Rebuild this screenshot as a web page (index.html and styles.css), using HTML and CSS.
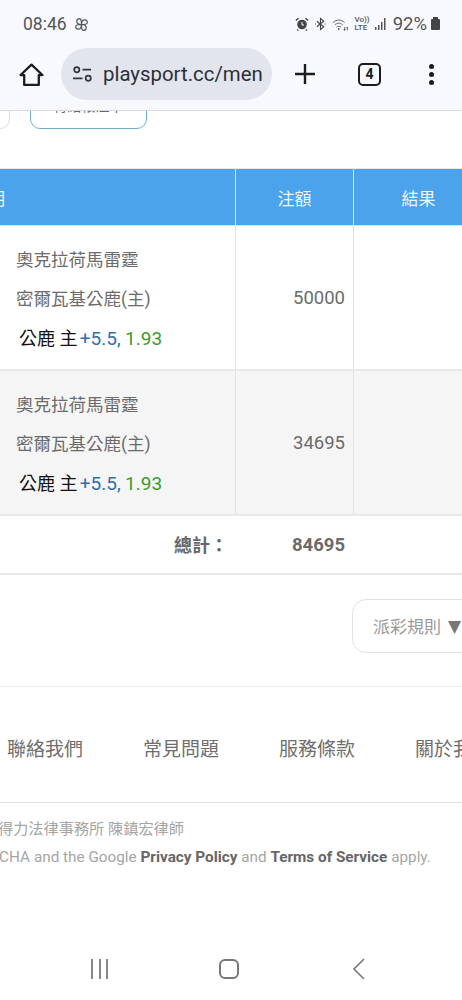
FILE: index.html
```html
<!DOCTYPE html>
<html lang="zh-Hant">
<head>
<meta charset="utf-8">
<title>playsport.cc</title>
<link rel="stylesheet" href="styles.css">
</head>
<body>
<div class="phone">
  <header class="chrome">
    <div class="status">
      <div class="status-left">
        <span>08:46</span>
        <svg class="fan" viewBox="0 0 18 18" width="17" height="17" fill="none" stroke="#555" stroke-width="1.3"><path d="M9 9C6 9 4 7.500 4 5.500 4 3.500 6 2.500 7.500 3 9 3.500 9 6 9 9ZM9 9C9 6 10.500 4 12.500 4 14.500 4 15.500 6 15 7.500 14.500 9 12 9 9 9ZM9 9C12 9 14 10.500 14 12.500 14 14.500 12 15.500 10.500 15 9 14.500 9 12 9 9ZM9 9C9 12 7.500 14 5.500 14 3.500 14 2.500 12 3 10.500 3.500 9 6 9 9 9Z"/></svg>
      </div>
      <div class="status-right">
        <svg viewBox="0 0 14 14" width="14" height="14"><circle cx="7" cy="7.500" r="4.800" fill="#444"/><path d="M1 3.500 3.500 1.200M13 3.500 10.500 1.200M3.200 12.500 2.200 13.500M10.800 12.500 11.800 13.500" stroke="#444" stroke-width="1.500"/><path d="M7 5v3h2" stroke="#fff" stroke-width="1" fill="none"/></svg>
        <svg viewBox="0 0 14 14" width="13" height="14" fill="none" stroke="#444" stroke-width="1.200"><path d="M3 4 10.500 10 7 13V1l3.500 3L3 10"/><path d="M1 7h1.500M11.500 7H13" stroke-dasharray="1 1"/></svg>
        <svg viewBox="0 0 20 14" width="18" height="13" fill="none" stroke="#555" stroke-width="1"><path d="M1 5C5 1 10 1 14 5M3 7.500C6 5 9 5 12 7.500M5 10C6.500 8.700 8.500 8.700 10 10"/><circle cx="7.500" cy="12" r="1" fill="#555" stroke="none"/><path d="M14 10v3.500M13 12.500l1 1 1-1M17 13.500V10M16 11l1-1 1 1"/></svg>
        <span class="lte"><span>Vo))</span><span>LTE</span></span>
        <svg viewBox="0 0 12 12" width="12" height="12" fill="#555"><rect x="0" y="9" width="1.500" height="3"/><rect x="3" y="7" width="1.500" height="5"/><rect x="6" y="4" width="1.500" height="8"/><rect x="9" y="0" width="1.500" height="12"/></svg>
        <span class="pct">92%</span>
        <span class="battery"></span>
      </div>
    </div>
    <div class="toolbar">
      <svg class="home" viewBox="0 0 24 24" width="25" height="25" fill="none" stroke="#1c1c1e" stroke-width="2.200" stroke-linejoin="round"><path d="M1.500 12.500 12 2.500l10.500 10H19V22H5v-9.500Z"/></svg>
      <div class="omnibox">
        <svg viewBox="0 0 22 18" width="21" height="18" fill="none" stroke="#33363c" stroke-width="1.800"><circle cx="5" cy="4.500" r="2.700"/><path d="M11 4.500h9M1 13.500h10"/><circle cx="17" cy="13.500" r="2.700"/></svg>
        <span class="url">playsport.cc/men</span>
      </div>
      <svg class="plus" viewBox="0 0 24 24" width="24" height="24" stroke="#1c1c1e" stroke-width="2.400"><path d="M12 2v20M2 12h20"/></svg>
      <span class="tabs">4</span>
      <span class="more"><i></i><i></i><i></i></span>
    </div>
  </header>

  <main class="viewport">
    <div class="sheet">
      <div class="tab-clip">
        <div class="tab-row">
          <a class="tab tab-grey">全部注單</a>
          <a class="tab tab-active">待結帳注單</a>
        </div>
      </div>

      <table class="bets">
        <thead>
          <tr><th class="col-game">投注項目說明</th><th class="col-amt">注額</th><th class="col-res">結果</th></tr>
        </thead>
        <tbody>
          <tr class="first">
            <td class="game">
              <p>奧克拉荷馬雷霆</p>
              <p>密爾瓦基公鹿(主)</p>
              <p class="pick"><b>公鹿 主</b> <em class="spread">+5.5,</em> <em class="odds">1.93</em></p>
            </td>
            <td class="amt">50000</td>
            <td></td>
          </tr>
          <tr class="alt">
            <td class="game">
              <p>奧克拉荷馬雷霆</p>
              <p>密爾瓦基公鹿(主)</p>
              <p class="pick"><b>公鹿 主</b> <em class="spread">+5.5,</em> <em class="odds">1.93</em></p>
            </td>
            <td class="amt">34695</td>
            <td></td>
          </tr>
        </tbody>
        <tfoot>
          <tr>
            <td class="total-label">總計：</td>
            <td class="amt total-num">84695</td>
            <td></td>
          </tr>
        </tfoot>
      </table>

      <div class="rules-row">
        <a class="rules">派彩規則 <span class="tri">▼</span></a>
      </div>

      <nav class="foot-links">
        <a>聯絡我們</a><a>常見問題</a><a>服務條款</a><a>關於我們</a>
      </nav>

      <div class="legal">
        <p class="lawyer">法律顧問：得力法律事務所 陳鎮宏律師</p>
        <p class="recaptcha">This site is protected by reCAPTCHA and the Google <b>Privacy Policy</b> and <b>Terms of Service</b> apply.</p>
      </div>
    </div>
  </main>

  <footer class="navbar">
    <span class="recents"><i></i><i></i><i></i></span>
    <span class="homebtn"></span>
    <svg viewBox="0 0 14 24" width="14" height="24" fill="none" stroke="#777" stroke-width="1.600"><path d="M12 2 2 12l10 10"/></svg>
  </footer>
</div>
</body>
</html>
```

FILE: styles.css
```css
* { box-sizing: border-box; }
html, body { margin: 0; padding: 0; }
body {
  font-family: Roboto, "Noto Sans CJK TC", sans-serif;
  background: #fff;
}
.phone {
  width: 462px;
  height: 1000px;
  overflow: hidden;
  display: flex;
  flex-direction: column;
}
.chrome {
  height: 111px;
  flex: none;
  background: #f8f9ff;
  border-bottom: 1px solid #d9dade;
}
.status {
  height: 48px;
  padding: 0 22px 0 23px;
  display: flex;
  justify-content: space-between;
  align-items: center;
  color: #555;
}
.status-left {
  display: flex;
  align-items: center;
  gap: 6px;
  font-size: 17.500px;
}
.status-right {
  display: flex;
  align-items: center;
  gap: 5px;
}
.lte {
  display: flex;
  flex-direction: column;
  font-size: 8px;
  line-height: 8px;
  font-weight: 500;
  color: #555;
}
.pct { font-size: 18.500px; margin-left: 1px; margin-right: -1px; }
.battery {
  width: 9px;
  height: 11px;
  background: #444;
  border-radius: 1px;
  position: relative;
}
.battery::before {
  content: "";
  position: absolute;
  top: -2px;
  left: 2px;
  width: 5px;
  height: 2px;
  background: #444;
}
.toolbar {
  height: 52px;
  display: flex;
  align-items: center;
  padding-left: 19px;
}
.home { flex: none; }
.omnibox {
  width: 211px;
  height: 52px;
  margin-left: 17px;
  border-radius: 26px;
  background: #e2e5ed;
  display: flex;
  align-items: center;
  gap: 10px;
  padding-left: 11px;
  overflow: hidden;
  flex: none;
}
.url {
  font-size: 20.400px;
  color: #2d3036;
  white-space: nowrap;
}
.plus { flex: none; margin-left: 21px; }
.tabs {
  flex: none;
  margin-left: 41px;
  width: 23px;
  height: 23px;
  border: 2.200px solid #1c1c1e;
  border-radius: 5px;
  font-size: 14px;
  font-weight: 700;
  color: #1c1c1e;
  display: flex;
  align-items: center;
  justify-content: center;
}
.more {
  flex: none;
  margin-left: 48px;
  display: flex;
  flex-direction: column;
  gap: 3px;
}
.more i {
  width: 5px;
  height: 5px;
  border-radius: 50%;
  background: #1c1c1e;
}

.viewport {
  flex: 1;
  overflow: hidden;
  background: #fff;
}
.sheet {
  width: 1000px;
  margin-left: -300px;
}
.tab-clip {
  height: 18px;
  overflow: hidden;
  display: flex;
  align-items: flex-end;
}
.tab-row {
  display: flex;
  gap: 20px;
  padding-left: 200px;
  flex: none;
}
.tab {
  width: 110px;
  height: 40px;
  border: 1px solid #ddd;
  border-radius: 10px;
  font-size: 14px;
  color: #666;
  display: flex;
  align-items: center;
  justify-content: center;
  line-height: 1;
  padding-bottom: 6px;
}
.tab-active {
  width: 117px;
  border-color: #6fb0d0;
}

.bets {
  margin-top: 39px;
  border-collapse: collapse;
  table-layout: fixed;
  width: 784px;
}
.bets th {
  height: 57px;
  background: #4ba3ec;
  color: #eef6fd;
  font-size: 17px;
  font-weight: 400;
  text-align: center;
  border: 1px solid #d8e2ec;
  border-top-color: #e4e7ea;
}
.bets th.col-game {
  width: 535px;
  text-align: right;
  padding-right: 230px;
  white-space: nowrap;
  overflow: hidden;
}
.bets th.col-amt { width: 118px; }
.bets td {
  border-left: 1px solid #e0e2e6;
  border-right: 1px solid #e0e2e6;
  border-bottom: 2px solid #e8e8e8;
}
.bets td.game {
  height: 145px;
  padding: 6px 0 0 315px;
  font-size: 17.500px;
  color: #6b6b6b;
  vertical-align: middle;
}
.bets .first td.game { height: 144px; }
.game p {
  margin: 0;
  line-height: 39px;
  white-space: nowrap;
}
.game .pick { padding-left: 3px; color: #111; }
.pick b { font-weight: 400; font-size: 18px; }
.pick em { font-style: normal; font-size: 19px; }
.spread { color: #2f6fae; margin-left: -2px; }
.odds { color: #3c9a2e; }
.bets td.amt {
  font-size: 18.500px;
  color: #6b6b6b;
  text-align: right;
  padding: 1px 8px 0 0;
  vertical-align: middle;
}
.alt td { background: #f5f5f5; }
.bets tfoot td {
  height: 59px;
  border-left-color: transparent;
  border-right-color: transparent;
}
.bets td.total-label {
  font-size: 18px;
  font-weight: 700;
  color: #666;
  text-align: right;
  padding-right: 7px;
}
.bets td.total-num { font-weight: 700; }

.rules-row {
  height: 112px;
  border-bottom: 1px solid #ebebeb;
  padding: 24px 0 0 652px;
}
.rules {
  display: flex;
  align-items: center;
  gap: 7px;
  width: 160px;
  height: 54px;
  border: 1px solid #e2e2e2;
  border-radius: 14px;
  padding-left: 20px;
  font-size: 17px;
  color: #9a9a9a;
  white-space: nowrap;
}
.tri { color: #777; font-size: 17px; font-family: "DejaVu Sans", sans-serif; }

.foot-links {
  height: 116px;
  padding: 6px 0 0 307px;
  border-bottom: 1px solid #e0e0e0;
  display: flex;
  align-items: center;
  gap: 60px;
}
.foot-links a {
  font-size: 19px;
  color: #6e6e6e;
  white-space: nowrap;
}

.legal { padding-top: 16px; color: #a5a5a5; }
.legal p { margin: 0; white-space: nowrap; }
.lawyer {
  font-size: 15.200px;
  line-height: 21px;
  padding-left: 222px;
}
.legal .recaptcha {
  font-size: 15.300px;
  line-height: 21px;
  margin-top: 7px;
  padding-left: 82px;
}
.recaptcha b { color: #666; font-weight: 700; }

.navbar {
  flex: none;
  height: 62px;
  background: #fff;
  display: flex;
  align-items: center;
  padding-left: 91px;
  margin-top: -1px;
}
.recents { display: flex; gap: 5.500px; width: 18px; }
.recents i { flex: none; width: 2px; height: 20px; background: #888; }
.homebtn {
  width: 20px;
  height: 20px;
  border: 2px solid #777;
  border-radius: 6px;
  margin-left: 110px;
}
.navbar svg { margin-left: 113px; }
```
